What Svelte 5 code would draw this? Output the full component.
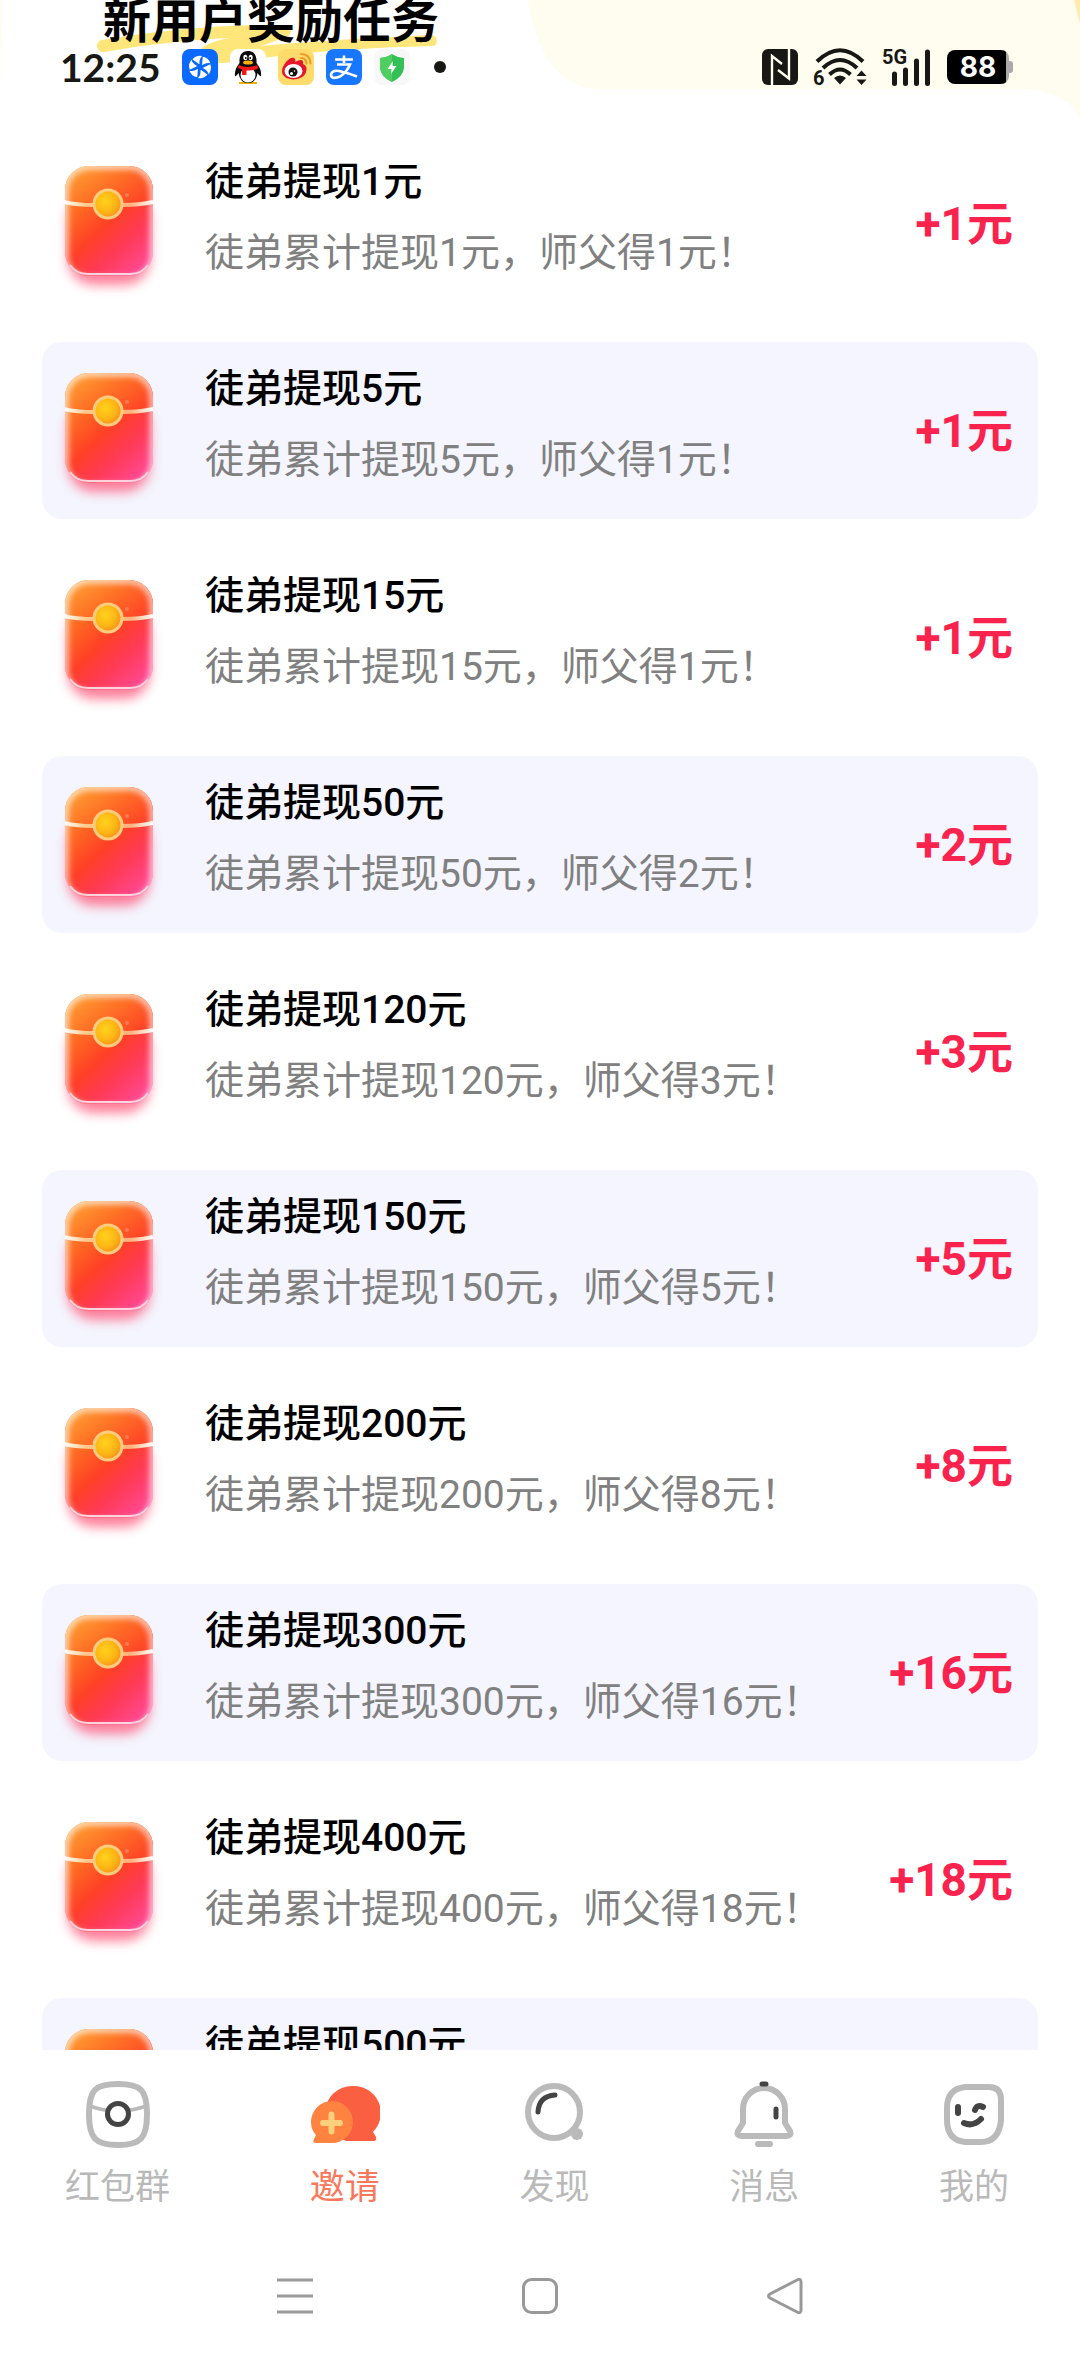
<script>
  const unit = "元";

  const tasks = [
    { goal: 1, reward: 1 },
    { goal: 5, reward: 1 },
    { goal: 15, reward: 1 },
    { goal: 50, reward: 2 },
    { goal: 120, reward: 3 },
    { goal: 150, reward: 5 },
    { goal: 200, reward: 8 },
    { goal: 300, reward: 16 },
    { goal: 400, reward: 18 },
    { goal: 500, reward: 20 }
  ];

  const tabs = [
    { id: "groups", label: "红包群" },
    { id: "invite", label: "邀请" },
    { id: "discover", label: "发现" },
    { id: "messages", label: "消息" },
    { id: "mine", label: "我的" }
  ];

  let current = $state("invite");
</script>

<!-- shared paint for the envelopes -->
<svg class="defs" width="0" height="0" aria-hidden="true">
  <defs>
    <linearGradient id="envFill" x1="0.1" y1="0" x2="0.85" y2="1">
      <stop offset="0" stop-color="#ffa02c" />
      <stop offset="0.28" stop-color="#ff6a22" />
      <stop offset="0.52" stop-color="#ff4026" />
      <stop offset="0.72" stop-color="#ff3a55" />
      <stop offset="1" stop-color="#ff4a98" />
    </linearGradient>
    <linearGradient id="envFlap" x1="0" y1="0.1" x2="1" y2="0.7">
      <stop offset="0" stop-color="#ffa636" />
      <stop offset="0.5" stop-color="#ff7426" />
      <stop offset="1" stop-color="#ff4326" />
    </linearGradient>
    <linearGradient id="envBand" x1="0" y1="0" x2="1" y2="0">
      <stop offset="0" stop-color="#fff" />
      <stop offset="0.25" stop-color="#ffc98a" />
      <stop offset="0.75" stop-color="#ffb27c" />
      <stop offset="1" stop-color="#fff" />
    </linearGradient>
    <radialGradient id="envCoin" cx="0.4" cy="0.4" r="0.65">
      <stop offset="0" stop-color="#ffd21c" />
      <stop offset="0.6" stop-color="#fdb515" />
      <stop offset="1" stop-color="#f58a1c" />
    </radialGradient>
    <filter id="envBlur" x="-30%" y="-30%" width="160%" height="160%">
      <feGaussianBlur stdDeviation="6" />
    </filter>
    <filter id="envGlow" x="-30%" y="-30%" width="160%" height="160%">
      <feGaussianBlur stdDeviation="3" />
    </filter>
    <clipPath id="envClip">
      <rect x="23" y="31" width="88" height="110" rx="24" />
    </clipPath>
  </defs>
</svg>

<div class="app">
  <main class="page">
    <header class="top">
      <svg class="top-bg" viewBox="0 0 1080 150" preserveAspectRatio="none" aria-hidden="true">
        <rect width="1080" height="150" fill="#fffdef" />
        <path d="M1074 0h6v24z" fill="#ffeab0" />
        <path d="M2 0H528Q542 88 600 89H1030Q1068 94 1080 118V150H0V88Q2 40 2 0Z" fill="#fff" />
      </svg>
      <h1>
        新用户奖励任务
        <svg class="marker" viewBox="0 0 350 40" aria-hidden="true">
          <path d="M7 22Q100 6 189 7" fill="none" stroke="#ffe67a" stroke-width="12" stroke-linecap="round" />
          <path d="M103 27Q112 16 142 13L192 10Q180 18 164 22Q240 15 336 11a6 6 0 0 1 2 11Q230 24 136 38Q112 42 108 34Z" fill="#ffe67a" />
        </svg>
      </h1>

      <div class="status">
        <span class="time">12:25</span>
        <div class="notices">
          <svg viewBox="0 0 36 36" aria-hidden="true">
            <rect width="36" height="36" rx="8" fill="#0a69ff" />
            <g fill="#fff">
              {#each [0, 60, 120, 180, 240, 300] as turn}
                <path d="M17 15L10.500 10.500Q14 6 20 7Q17 10 17.500 15Z" transform="rotate({turn} 18 18)" />
              {/each}
            </g>
          </svg>
          <svg viewBox="0 0 36 36" aria-hidden="true">
            <rect width="36" height="36" rx="8" fill="#fff" />
            <path d="M9 33h18v2H9z" fill="#f2b200" />
            <path d="M18 2C11.500 2 9 7 9.500 14Q4 21 5 27Q6 28 8.500 24Q10 34 18 34T27.500 24Q30 28 31 27Q32 21 26.500 14C27 7 24.500 2 18 2Z" fill="#0b0b0b" />
            <ellipse cx="18" cy="26" rx="7.500" ry="7.500" fill="#fff" />
            <ellipse cx="15.300" cy="8.500" rx="2" ry="2.800" fill="#fff" />
            <ellipse cx="20.700" cy="8.500" rx="2" ry="2.800" fill="#fff" />
            <circle cx="15.800" cy="9" r="0.900" />
            <circle cx="20.200" cy="9" r="0.900" />
            <ellipse cx="18" cy="13.500" rx="5" ry="2" fill="#f9b010" />
            <path d="M8.500 16Q18 20 27.500 16L28 19.500Q23 22 16.500 21.500V26H12V20.500L8 19Z" fill="#f01818" />
          </svg>
          <svg viewBox="0 0 36 36" aria-hidden="true">
            <rect width="36" height="36" rx="8" fill="#ffdb6b" />
            <path d="M4 22C4 16 12 7 16 9Q18 10 17 13Q26 8 25 15Q30 17 28 23C25 33 4 33 4 22Z" fill="#e6162d" />
            <ellipse cx="15.500" cy="22" rx="9" ry="7" fill="#fff" />
            <circle cx="15" cy="23" r="4.500" fill="#111" />
            <circle cx="13.500" cy="24.500" r="1.500" fill="#fff" />
            <circle cx="16.500" cy="22" r="0.800" fill="#fff" />
            <path d="M23 9Q28 9 28.500 14.500M23 5Q32 5 32.500 14.500" fill="none" stroke="#ee9a28" stroke-width="2" stroke-linecap="round" />
          </svg>
          <svg viewBox="0 0 36 36" aria-hidden="true">
            <rect width="36" height="36" rx="8" fill="#1877ff" />
            <path d="M18 6.500V14M9 10.500H27M11 15.500H24Q21 23 14 27.500Q5 31 5 25.500Q6 21 13 22Q22 24 31 27.500" fill="none" stroke="#fff" stroke-width="2.600" />
          </svg>
          <svg viewBox="0 0 36 36" aria-hidden="true">
            <rect width="36" height="36" rx="8" fill="#f7f8f7" />
            <path d="M18 5Q23 8.500 30 9V19Q29 28 18 33Q7 28 6 19V9Q13 8.500 18 5Z" fill="#35bf57" />
            <path d="M18 5Q13 8.500 6 9V19Q7 28 18 33Z" fill="#4fce62" />
            <path d="M19 12L13.500 20H17.500L17 25L22.500 17H18.500Z" fill="#fff" />
          </svg>
          <span class="more"></span>
        </div>

        <div class="signals">
          <svg class="nfc" viewBox="0 0 36 36" role="img" aria-label="NFC">
            <rect width="36" height="36" rx="6" fill="#171714" />
            <path d="M10 36V7L20 15M27 0V29.500L16 21" fill="none" stroke="#fffdef" stroke-width="2.400" />
          </svg>
          <svg class="wifi" viewBox="0 0 54 38" role="img" aria-label="Wi-Fi 6">
            <g fill="none" stroke="#171714" stroke-width="4">
              <path d="M4 13.500Q27 -9 50 13.500" />
              <path d="M10 20Q27 4 44 20" />
              <path d="M16.500 26.500Q27 16.500 37.500 26.500" />
            </g>
            <path d="M27 36.500L21 30Q27 25 33 30Z" fill="#171714" />
            <path d="M43.500 28L48.500 22.500L53.500 28ZM43.500 31.500H53.500L48.500 37Z" fill="#171714" />
            <text x="0" y="37" font-size="20">6</text>
          </svg>
          <svg class="cell" viewBox="0 0 50 38" role="img" aria-label="5G">
            <text x="0" y="16" font-size="20">5G</text>
            <path d="M12.500 26V35.500M23.500 22V35.500M34.500 13V35.500M45.500 4V35.500" stroke="#171714" stroke-width="5" stroke-linecap="round" />
          </svg>
          <div class="battery"><span>88</span></div>
        </div>
      </div>
    </header>

    <ul class="tasks">
      {#each tasks as task}
        <li class="task">
          <svg class="envelope" viewBox="0 0 132 177" aria-hidden="true">
            <rect x="26" y="60" width="82" height="90" rx="26" fill="#ff4a6e" opacity="0.700" filter="url(#envBlur)" />
            <rect x="23" y="31" width="88" height="110" rx="24" fill="url(#envFill)" />
            <g clip-path="url(#envClip)">
              <path d="M22 31H111V66Q98 70 66 70T22 66Z" fill="url(#envFlap)" />
              <rect x="23" y="31" width="88" height="114" rx="24" fill="none" stroke="#fff" stroke-width="6" opacity="0.800" filter="url(#envGlow)" />
              <path d="M22 67Q34 70 52 70H80Q98 70 111 67" fill="none" stroke="url(#envBand)" stroke-width="4" />
              <path d="M28 130Q34 139 46 139H88Q100 139 106 130" fill="none" stroke="#ffd3dc" stroke-width="2" />
            </g>
            <circle cx="66" cy="69" r="14" fill="url(#envCoin)" stroke="#ffcb7c" stroke-width="3" />
            <circle cx="85" cy="60" r="2" fill="#ff7a50" />
          </svg>
          <div class="info">
            <h2>徒弟提现{task.goal}{unit}</h2>
            <p>徒弟累计提现{task.goal}{unit}，师父得{task.reward}{unit}！</p>
          </div>
          <strong class="reward">+{task.reward}{unit}</strong>
        </li>
      {/each}
    </ul>
  </main>

  <nav class="tabs">
    {#each tabs as tab}
      <button class="tab" class:active={current === tab.id} onclick={() => (current = tab.id)}>
        <svg viewBox="0 0 70 74" aria-hidden="true">
          {#if tab.id === "groups"}
            <path d="M35 8C58 8 64 14 64 38S58 69 35 69S6 62 6 38S12 8 35 8Z" class="line" />
            <path d="M7 30Q20 35 35 35T63 30" class="line thin" />
            <circle cx="35" cy="38" r="10.500" fill="#fff" stroke="#444" stroke-width="5" />
          {:else if tab.id === "invite"}
            <path d="M42 10A27 27 0 0 1 63 56L66 61Q67 65 63 65H36Q15 56 15 36A27 27 0 0 1 42 10Z" fill="#fa5f42" />
            <path d="M22 25A21 21 0 0 1 22 67H6Q2 67 4 63L6 59Q1 54 1 46A21 21 0 0 1 22 25Z" fill="#fe8240" />
            <path d="M21.500 38.500V55.500M13 47H30" stroke="#ffd07c" stroke-width="6" stroke-linecap="round" />
          {:else if tab.id === "discover"}
            <circle cx="35" cy="36" r="26" class="line" />
            <circle cx="58" cy="58" r="6" fill="#bababa" />
            <path d="M19 36Q20 20 36 19" fill="none" stroke="#444" stroke-width="5" stroke-linecap="round" />
          {:else if tab.id === "messages"}
            <path d="M14 33A21 21 0 0 1 56 33V47L61 55Q63 60 57 60H13Q7 60 9 55L14 47Z" class="line" />
            <path d="M29 68H41" class="line" stroke-linecap="round" />
            <path d="M33 8H37M47 33V41" stroke="#444" stroke-width="5" stroke-linecap="round" />
          {:else}
            <path d="M26 11H50Q62 11 62 24V44Q60 66 42 66H26Q8 64 8 44V32Q8 13 26 11Z" class="line" />
            <path d="M19 31V37M36 34Q38 28 44 31M25 47Q34 51 42 43" fill="none" stroke="#444" stroke-width="6" stroke-linecap="round" />
          {/if}
        </svg>
        <span>{tab.label}</span>
      </button>
    {/each}
  </nav>

  <div class="system">
    <button aria-label="Recent apps">
      <svg viewBox="0 0 36 36"><path d="M0 2H36M0 18H36M0 34H36" /></svg>
    </button>
    <button aria-label="Home">
      <svg viewBox="0 0 36 36"><rect x="1.500" y="1.500" width="33" height="33" rx="8" /></svg>
    </button>
    <button aria-label="Back">
      <svg viewBox="0 0 36 36"><path d="M30 2Q34 0 34 4V32Q34 36 30 34L3 20Q0 18 3 16Z" /></svg>
    </button>
  </div>
</div>

<style>
  :global(body) {
    margin: 0;
    background: #fff;
  }
  .defs {
    position: absolute;
  }
  .app {
    display: flex;
    flex-direction: column;
    height: 100vh;
    background: #fff;
    color: #000;
    font-family: Roboto, "Noto Sans CJK SC", sans-serif;
  }
  .page {
    flex: 1;
    min-height: 0;
    overflow: hidden;
  }

  /* header */
  .top {
    position: relative;
    isolation: isolate;
  }
  .top-bg {
    position: absolute;
    z-index: -2;
    top: 0;
    left: 0;
    width: 100%;
    height: 150px;
  }
  h1 {
    position: relative;
    margin: 0;
    padding-left: 103px;
    font-family: "Noto Sans CJK SC", sans-serif;
    font-size: 48px;
    line-height: 34px;
    font-weight: 700;
  }
  .marker {
    position: absolute;
    z-index: -1;
    left: 96px;
    top: 24px;
    width: 350px;
    height: 40px;
  }
  .status {
    display: flex;
    align-items: center;
    height: 66px;
    padding: 0 71px 0 60px;
  }
  .time {
    width: 122px;
    color: #171714;
    font-family: Lato, sans-serif;
    font-size: 39px;
    line-height: 54px;
    font-weight: 700;
  }
  .notices {
    display: flex;
    align-items: center;
    gap: 12px;
    flex: 1;
  }
  .notices svg {
    width: 36px;
    height: 36px;
  }
  .more {
    width: 12px;
    height: 12px;
    margin-left: 12px;
    border-radius: 50%;
    background: #171714;
  }
  .signals {
    display: flex;
    align-items: center;
    gap: 15px;
  }
  .signals text {
    fill: #171714;
    font-family: Roboto, sans-serif;
    font-weight: 700;
  }
  .nfc {
    width: 36px;
    height: 36px;
  }
  .wifi {
    width: 54px;
    height: 38px;
  }
  .cell {
    width: 50px;
    height: 38px;
  }
  .battery {
    position: relative;
    width: 62px;
    height: 34px;
    border-radius: 8px;
    background: linear-gradient(90deg, #000 59px, #aaa 59px);
    color: #fff;
    font-family: Inter, sans-serif;
    font-size: 28px;
    line-height: 34px;
    font-weight: 700;
    text-align: center;
  }
  .battery::after {
    content: "";
    position: absolute;
    top: 11px;
    right: -4px;
    width: 4px;
    height: 12px;
    border-radius: 0 3px 3px 0;
    background: #aaa;
  }

  /* reward list */
  .tasks {
    position: relative;
    display: flex;
    flex-direction: column;
    gap: 30px;
    margin: 0;
    padding: 35px 42px 0;
    list-style: none;
  }
  .task {
    display: flex;
    align-items: center;
    padding-right: 25px;
    border-radius: 20px;
  }
  .task:nth-child(even) {
    background: #f4f5fe;
  }
  .envelope {
    flex: none;
    width: 132px;
    height: 177px;
    margin-right: 31px;
  }
  .info {
    flex: 1;
    align-self: flex-start;
    padding-top: 19px;
  }
  h2,
  p {
    margin: 0;
    font-size: 39px;
    line-height: 56px;
    white-space: nowrap;
  }
  h2 {
    margin-bottom: 15px;
    font-weight: 500;
  }
  p {
    color: #808080;
    font-weight: 400;
  }
  .reward {
    color: #fa234e;
    font-size: 46px;
    line-height: 60px;
    font-weight: 700;
  }

  /* bottom tabs */
  .tabs {
    display: flex;
    justify-content: space-between;
    padding: 26px 71px 17px 65px;
    background: #fff;
  }
  button {
    padding: 0;
    border: 0;
    background: none;
    font: inherit;
    cursor: pointer;
  }
  .tab {
    display: flex;
    flex-direction: column;
    align-items: center;
    gap: 13px;
    color: #b9b9b9;
    font-size: 35px;
    line-height: 50px;
    font-weight: 400;
  }
  .tab.active {
    color: #f9785c;
  }
  .tab svg {
    width: 70px;
    height: 74px;
  }
  .line {
    fill: none;
    stroke: #bababa;
    stroke-width: 6px;
    stroke-linejoin: round;
  }
  .thin {
    stroke-width: 4px;
  }

  .system {
    display: flex;
    justify-content: center;
    gap: 165px;
    height: 132px;
  }
  .system button {
    width: 80px;
  }
  .system svg {
    display: block;
    width: 36px;
    height: 36px;
    margin: auto;
    fill: none;
    stroke: #999;
    stroke-width: 3px;
  }
</style>
